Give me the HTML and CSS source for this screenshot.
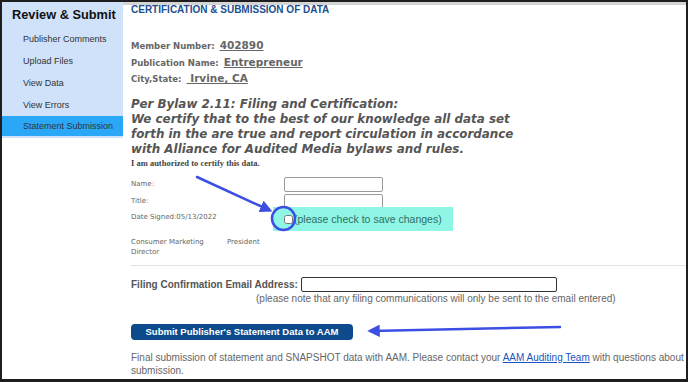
FILE: index.html
```html
<!DOCTYPE html>
<html lang="en">
<head>
    <meta charset="UTF-8">
    <title>Review &amp; Submit</title>
    <link rel="stylesheet" href="styles.css">
</head>
<body>
    <div class="frame">
        <!-- Sidebar -->
        <aside class="sidebar">
            <div class="side-box">
                <h2 class="side-title">Review &amp; Submit</h2>
                <a href="#" class="side-link">Publisher Comments</a>
                <a href="#" class="side-link">Upload Files</a>
                <a href="#" class="side-link">View Data</a>
                <a href="#" class="side-link">View Errors</a>
                <a href="#" class="side-link active">Statement Submission</a>
            </div>
        </aside>

        <!-- Main content -->
        <main class="content">
            <h1 class="page-title">CERTIFICATION &amp; SUBMISSION OF DATA</h1>

            <div class="member-info">
                <div><span class="lbl">Member Number:</span> <span class="val">402890</span></div>
                <div><span class="lbl">Publication Name:</span> <span class="val">Entrepreneur</span></div>
                <div><span class="lbl">City,State:</span> <span class="val">&nbsp;Irvine, CA</span></div>
            </div>

            <h3 class="bylaw">Per Bylaw 2.11: Filing and Certification:<br>We certify that to the best of our knowledge all data set forth in the are true and report circulation in accordance with Alliance for Audited Media bylaws and rules.</h3>
            <p class="authorized">I am authorized to certify this data.</p>

            <div class="sign-grid">
                <span class="small-lbl">Name:</span>
                <input type="text" class="sign-input">
                <span class="small-lbl">Title:</span>
                <input type="text" class="sign-input">
                <span class="small-lbl date-lbl">Date Signed:05/13/2022</span>
                <label class="check-box"><input type="checkbox" class="save-check">(please check to save changes)</label>
            </div>

            <div class="signer">
                <span class="small-lbl signer-title">Consumer Marketing Director</span>
                <span class="small-lbl">President</span>
            </div>

            <hr class="divider">

            <div class="email-row">
                <label class="email-lbl">Filing Confirmation Email Address:</label>
                <input type="text" class="email-input">
            </div>
            <p class="email-note">(please note that any filing communications will only be sent to the email entered)</p>

            <button class="submit-btn">Submit Publisher's Statement Data to AAM</button>

            <p class="final-note">Final submission of statement and SNAPSHOT data with AAM. Please contact your <a href="#">AAM Auditing Team</a> with questions about<br>submission.</p>
        </main>

        <!-- Annotation arrows -->
        <svg class="annotations" width="688" height="382" viewBox="0 0 688 382">
            <defs>
                <marker id="head" markerWidth="5" markerHeight="5" refX="3.5" refY="2.5" orient="auto" markerUnits="strokeWidth">
                    <path d="M0,0 L5,2.5 L0,5 z" fill="#3d4fe3"/>
                </marker>
            </defs>
            <line x1="197" y1="177" x2="269" y2="210" stroke="#3d4fe3" stroke-width="2.5" stroke-linecap="round" marker-end="url(#head)"/>
            <circle cx="283.5" cy="218.5" r="11.5" fill="none" stroke="#3d4fe3" stroke-width="2.5"/>
            <line x1="560" y1="327" x2="371" y2="331" stroke="#3d4fe3" stroke-width="2.5" stroke-linecap="round" marker-end="url(#head)"/>
        </svg>
    </div>
</body>
</html>
```

FILE: styles.css
```css
body {
    margin: 0;
    padding: 0;
    background-color: #fff;
    font-family: "Liberation Sans", Arial, sans-serif;
}

.frame {
    position: relative;
    width: 688px;
    height: 382px;
    box-sizing: border-box;
    border: 2px solid #1e1e1e;
    border-bottom-width: 3px;
    display: flex;
    overflow: hidden;
}

/* Sidebar */
.sidebar {
    width: 121px;
    flex-shrink: 0;
}

.side-box {
    background-color: #cfe2fa;
    display: flex;
    flex-direction: column;
    padding-bottom: 2px;
}

.side-title {
    margin: 4px 0 4px 10px;
    font-size: 12.8px;
    line-height: 18px;
    font-weight: bold;
    color: #111;
    white-space: nowrap;
}

.side-link {
    display: block;
    padding: 0 0 0 21px;
    height: 22px;
    line-height: 22px;
    font-size: 9px;
    color: #333;
    text-decoration: none;
}

.side-link.active {
    background-color: #2aa8f7;
    height: 20px;
    line-height: 20px;
}

/* Main content */
.content {
    flex: 1;
    min-width: 0;
    border-top: 3px solid #d4d4d4;
    padding-left: 8px;
    color: #555;
}

.page-title {
    margin: -1px 0 0;
    font-size: 10px;
    line-height: 12px;
    font-weight: bold;
    color: #1d4f91;
}

.member-info {
    margin-top: 21px;
    font-family: "DejaVu Sans", Verdana, sans-serif;
    line-height: 13.5px;
}

.lbl {
    font-size: 8.5px;
    font-weight: bold;
    color: #666;
}

.val {
    font-size: 10.5px;
    font-weight: bold;
    color: #666;
    text-decoration: underline;
}

.bylaw {
    margin: 10px 0 0;
    width: 394px;
    font-family: "DejaVu Sans", Verdana, sans-serif;
    font-size: 11.9px;
    line-height: 15px;
    font-style: italic;
    font-weight: bold;
    color: #555;
}

.authorized {
    margin: 1px 0 0;
    font-family: "Liberation Serif", "Times New Roman", serif;
    font-size: 8.5px;
    line-height: 10px;
    font-weight: bold;
    color: #444;
}

.sign-grid {
    margin-top: 8px;
    display: grid;
    grid-template-columns: 153px auto;
    grid-auto-rows: 17px;
    align-items: center;
}

.small-lbl {
    font-family: "DejaVu Sans", Verdana, sans-serif;
    font-size: 7px;
    color: #666;
}

.date-lbl {
    align-self: start;
    margin-top: 3px;
}

.sign-input {
    width: 99px;
    height: 15px;
    box-sizing: border-box;
    margin: 0;
    border: 1px solid #9a9a9a;
    border-radius: 2px;
    background: #fff;
}

.check-box {
    margin-left: -11px;
    width: 180px;
    height: 24px;
    display: flex;
    align-items: center;
    background-color: #8ff6e6;
    font-size: 10.5px;
    color: #2f6d62;
    align-self: start;
    margin-top: -3px;
}

.save-check {
    width: 9px;
    height: 9px;
    margin: 2px 1px 0 11px;
}

.signer {
    margin-top: 10px;
    display: flex;
    line-height: 10px;
}

.signer-title {
    width: 96px;
}

.divider {
    margin: 8px 0 0;
    border: 0;
    border-top: 1px solid #e2e2e2;
}

.email-row {
    margin-top: 11px;
    display: flex;
    align-items: center;
    gap: 3px;
}

.email-lbl {
    font-size: 10px;
    font-weight: bold;
    color: #555;
}

.email-input {
    width: 256px;
    height: 15px;
    box-sizing: border-box;
    margin: 0;
    border: 1px solid #333;
    border-radius: 2px;
}

.email-note {
    margin: 0 0 0 125px;
    font-size: 10px;
    line-height: 13px;
    color: #666;
}

.submit-btn {
    display: block;
    margin-top: 19px;
    width: 222px;
    height: 16px;
    padding: 0;
    border: 0;
    border-radius: 4px;
    background-color: #0c4a8c;
    color: #fff;
    font-family: "Liberation Sans", Arial, sans-serif;
    font-size: 9.5px;
    font-weight: bold;
}

.final-note {
    margin: 11px -20px 0 0;
    font-size: 10px;
    line-height: 13px;
    color: #666;
    white-space: nowrap;
}

.final-note a {
    color: #1a55c4;
}

.annotations {
    position: absolute;
    left: -2px;
    top: -2px;
    pointer-events: none;
}
```
